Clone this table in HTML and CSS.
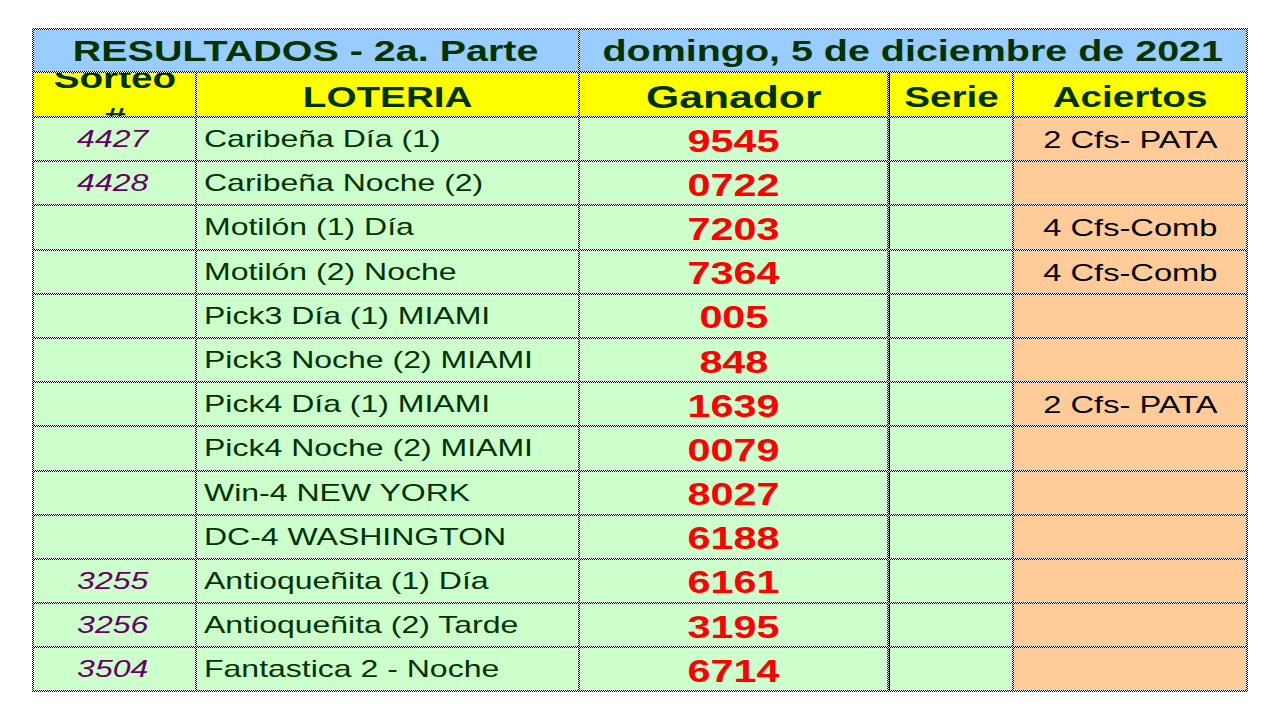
FILE: index.html
```html
<!DOCTYPE html>
<html lang="es">
<head>
<meta charset="utf-8">
<title>Resultados - 2a. Parte</title>
<link rel="stylesheet" href="styles.css">
</head>
<body>
<div class="sheet">
  <div class="cell title span2"><span class="t">RESULTADOS - 2a. Parte</span></div>
  <div class="cell title span3"><span class="t">domingo, 5 de diciembre de 2021</span></div>

  <div class="cell head sorteo-head"><span class="t">Sorteo<br>#</span></div>
  <div class="cell head"><span class="t">LOTERIA</span></div>
  <div class="cell head big"><span class="t">Ganador</span></div>
  <div class="cell head serie"><span class="t">Serie</span></div>
  <div class="cell head"><span class="t">Aciertos</span></div>

  <div class="cell num"><span class="t">4427</span></div>
  <div class="cell name"><span class="t">Caribeña Día (1)</span></div>
  <div class="cell win"><span class="t">9545</span></div>
  <div class="cell serie green"></div>
  <div class="cell hit"><span class="t">2 Cfs- PATA</span></div>

  <div class="cell num"><span class="t">4428</span></div>
  <div class="cell name"><span class="t">Caribeña Noche (2)</span></div>
  <div class="cell win"><span class="t">0722</span></div>
  <div class="cell serie green"></div>
  <div class="cell hit"></div>

  <div class="cell num"></div>
  <div class="cell name"><span class="t">Motilón (1) Día</span></div>
  <div class="cell win"><span class="t">7203</span></div>
  <div class="cell serie green"></div>
  <div class="cell hit"><span class="t">4 Cfs-Comb</span></div>

  <div class="cell num"></div>
  <div class="cell name"><span class="t">Motilón (2) Noche</span></div>
  <div class="cell win"><span class="t">7364</span></div>
  <div class="cell serie green"></div>
  <div class="cell hit"><span class="t">4 Cfs-Comb</span></div>

  <div class="cell num"></div>
  <div class="cell name"><span class="t">Pick3 Día (1) MIAMI</span></div>
  <div class="cell win"><span class="t">005</span></div>
  <div class="cell serie green"></div>
  <div class="cell hit"></div>

  <div class="cell num"></div>
  <div class="cell name"><span class="t">Pick3 Noche (2) MIAMI</span></div>
  <div class="cell win"><span class="t">848</span></div>
  <div class="cell serie green"></div>
  <div class="cell hit"></div>

  <div class="cell num"></div>
  <div class="cell name"><span class="t">Pick4 Día (1) MIAMI</span></div>
  <div class="cell win"><span class="t">1639</span></div>
  <div class="cell serie green"></div>
  <div class="cell hit"><span class="t">2 Cfs- PATA</span></div>

  <div class="cell num"></div>
  <div class="cell name"><span class="t">Pick4 Noche (2) MIAMI</span></div>
  <div class="cell win"><span class="t">0079</span></div>
  <div class="cell serie green"></div>
  <div class="cell hit"></div>

  <div class="cell num"></div>
  <div class="cell name"><span class="t">Win-4 NEW YORK</span></div>
  <div class="cell win"><span class="t">8027</span></div>
  <div class="cell serie green"></div>
  <div class="cell hit"></div>

  <div class="cell num"></div>
  <div class="cell name"><span class="t">DC-4 WASHINGTON</span></div>
  <div class="cell win"><span class="t">6188</span></div>
  <div class="cell serie green"></div>
  <div class="cell hit"></div>

  <div class="cell num"><span class="t">3255</span></div>
  <div class="cell name"><span class="t">Antioqueñita (1) Día</span></div>
  <div class="cell win"><span class="t">6161</span></div>
  <div class="cell serie green"></div>
  <div class="cell hit"></div>

  <div class="cell num"><span class="t">3256</span></div>
  <div class="cell name"><span class="t">Antioqueñita (2) Tarde</span></div>
  <div class="cell win"><span class="t">3195</span></div>
  <div class="cell serie green"></div>
  <div class="cell hit"></div>

  <div class="cell num"><span class="t">3504</span></div>
  <div class="cell name"><span class="t">Fantastica 2 - Noche</span></div>
  <div class="cell win"><span class="t">6714</span></div>
  <div class="cell serie green"></div>
  <div class="cell hit"></div>
</div>
</body>
</html>
```

FILE: styles.css
```css
html, body {
  margin: 0;
  padding: 0;
  background: #ffffff;
}

body {
  font-family: "Liberation Sans", Arial, sans-serif;
}

.sheet {
  display: grid;
  grid-template-columns: 161px 381px 307px 123px 232px;
  grid-template-rows: 41px 43px repeat(13, 42.2px);
  gap: 2px;
  padding: 2px;
  width: max-content;
  margin: 28px 0 0 32px;
  background: conic-gradient(#000 25%, #fff 0 50%, #000 0 75%, #fff 0) 0 0 / 2px 2px;
}

.cell {
  display: flex;
  align-items: center;
  justify-content: center;
  overflow: hidden;
  background: #ccffcc;
  box-sizing: border-box;
}

.t {
  display: inline-block;
  white-space: nowrap;
  transform: scaleX(1.3333);
}

.span2 { grid-column: span 2; }
.span3 { grid-column: span 3; }

.title {
  background: #99ccff;
  color: #003300;
  font-weight: bold;
  font-size: 29.6px;
}

.head {
  background: #ffff00;
  color: #003300;
  font-weight: bold;
  font-size: 29px;
  padding-top: 5px;
}

.head.big {
  font-size: 32px;
}

.sorteo-head {
  align-items: flex-start;
  padding-top: 0;
}

.sorteo-head .t {
  line-height: 40px;
  text-align: center;
  margin-top: -14.6px;
}

.serie {
  border-left: 1px solid #000;
}

.num {
  color: #660066;
  font-style: italic;
  font-size: 24px;
  padding-right: 4px;
}

.name {
  justify-content: flex-start;
  padding-left: 7px;
  color: #003300;
  font-size: 24px;
}

.name .t {
  transform-origin: left center;
}

.win {
  color: #ff0000;
  font-weight: bold;
  font-size: 31px;
  padding-top: 5px;
}

.hit {
  background: #ffcc99;
  color: #000;
  font-size: 24.5px;
  padding-top: 2px;
}
```
